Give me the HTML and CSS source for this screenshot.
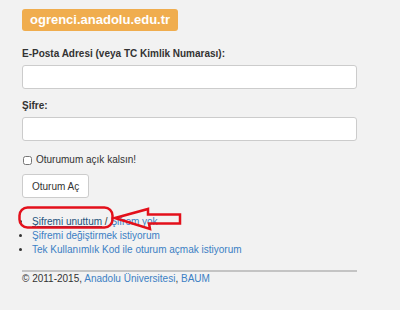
FILE: index.html
```html
<!DOCTYPE html>
<html lang="tr">
<head>
  <meta charset="UTF-8">
  <title>Öğrenci Girişi</title>
  <link rel="stylesheet" href="styles.css">
</head>
<body>
  <div class="page">
    <div class="brand">ogrenci.anadolu.edu.tr</div>

    <form class="login">
      <label class="field-label" for="email">E-Posta Adresi (veya TC Kimlik Numarası):</label>
      <input type="text" id="email" class="field">

      <label class="field-label" for="pass">Şifre:</label>
      <input type="password" id="pass" class="field">

      <label class="remember"><input type="checkbox"> Oturumum açık kalsın!</label>

      <button type="button" class="btn">Oturum Aç</button>
    </form>

    <ul class="links">
      <li><a href="#" class="strong-link">Şifremi unuttum</a> / <a href="#">Şifrem yok</a></li>
      <li><a href="#">Şifremi değiştirmek istiyorum</a></li>
      <li><a href="#">Tek Kullanımlık Kod ile oturum açmak istiyorum</a></li>
    </ul>

    <hr class="rule">
    <p class="footer">© 2011-2015, <a href="#">Anadolu Üniversitesi</a>, <a href="#">BAUM</a></p>

    <!-- red annotation drawn over the link -->
    <svg class="mark" width="172" height="30" viewBox="0 0 172 30">
      <rect x="5.5" y="3.5" width="93" height="20" rx="8" ry="8" fill="none" stroke="#e3101b" stroke-width="2.5"/>
      <path d="M101 14 L134 5 L134 10.5 L166 10.5 L166 19.5 L135 19.5 L136 25 Z" fill="none" stroke="#e3101b" stroke-width="2.5" stroke-linejoin="miter"/>
    </svg>
  </div>
</body>
</html>
```

FILE: styles.css
```css
body {
  margin: 0;
  background: #f2f2f2;
  font-family: 'Liberation Sans', Arial, sans-serif;
  font-size: 10px;
  color: #333;
}

.page {
  position: relative;
  width: 335px;
  padding: 9px 22px;
}

.brand {
  display: inline-block;
  background: #f0ad4e;
  color: #fff;
  font-weight: bold;
  font-size: 13px;
  line-height: 22px;
  padding: 0 8px;
  border-radius: 3px;
}

.login {
  margin-top: 17px;
}

.field-label {
  display: block;
  font-weight: bold;
  line-height: 12px;
  margin-bottom: 5px;
}

.field {
  display: block;
  box-sizing: border-box;
  width: 100%;
  height: 24px;
  margin: 0 0 11px;
  border: 1px solid #ccc;
  border-radius: 3px;
  background: #fff;
}

.remember {
  display: flex;
  align-items: center;
  gap: 4px;
  line-height: 12px;
  margin-top: 13px;
}

.remember input {
  margin: 0 0 0 1px;
  width: 9px;
  height: 9px;
}

.btn {
  display: block;
  margin-top: 8px;
  height: 24px;
  padding: 0 9px;
  background: #fff;
  border: 1px solid #ccc;
  border-radius: 3px;
  font-family: inherit;
  font-size: 10px;
  color: #333;
}

.links {
  margin: 17px 0 0;
  padding-left: 10px;
  line-height: 14px;
}

a {
  color: #3b7fc4;
  text-decoration: none;
}

.strong-link {
  color: #23527c;
  text-decoration: underline;
}

.rule {
  margin: 13px 0 0;
  border: 0;
  border-top: 2px solid #c4c4c4;
}

.footer {
  margin: 0;
  line-height: 13px;
}

.mark {
  position: absolute;
  left: 14px;
  top: 204px;
}
```
